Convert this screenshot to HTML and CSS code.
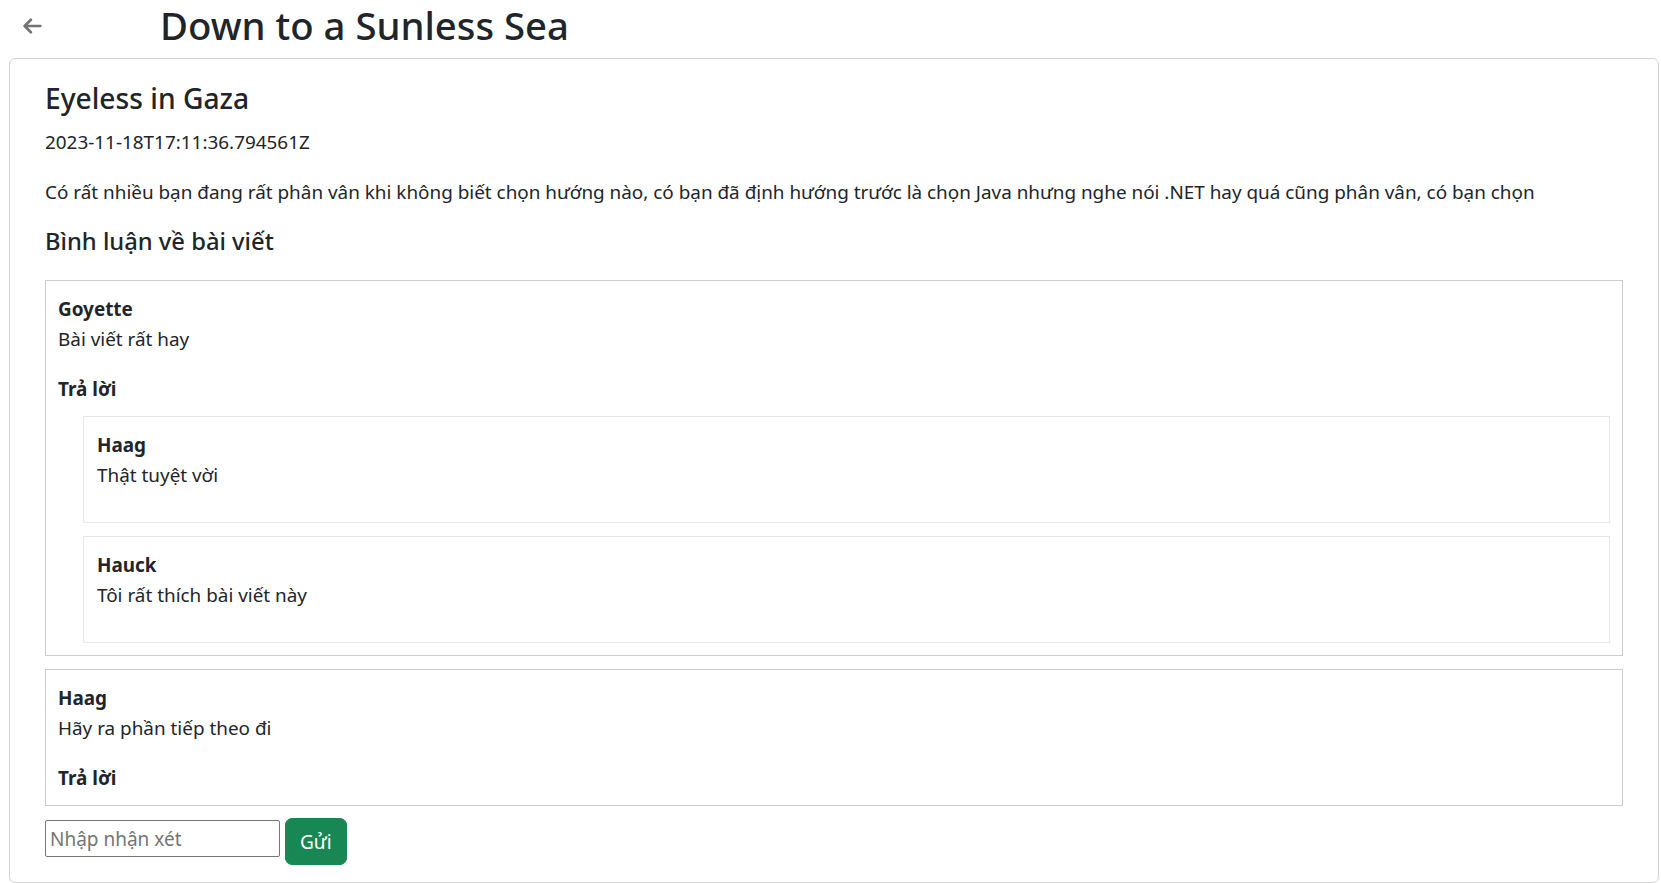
FILE: index.html
```html
<!DOCTYPE html>
<html lang="vi">
<head>
<meta charset="utf-8">
<title>Down to a Sunless Sea</title>
<link rel="stylesheet" href="styles.css">
</head>
<body>
<header class="topbar">
  <a class="back" href="#" aria-label="Quay lại">
    <svg viewBox="0 0 20 18" width="20" height="18" aria-hidden="true">
      <path d="M18.3 9H2.9M8.9 2.7L2.6 9L8.9 15.3" fill="none" stroke="currentColor" stroke-width="2.7" stroke-linecap="round" stroke-linejoin="round"/>
    </svg>
  </a>
  <h2 class="page-title">Down to a Sunless Sea</h2>
</header>
<main class="card">
  <h4 class="post-title">Eyeless in Gaza</h4>
  <p class="post-date">2023-11-18T17:11:36.794561Z</p>
  <p class="post-body">Có rất nhiều bạn đang rất phân vân khi không biết chọn hướng nào, có bạn đã định hướng trước là chọn Java nhưng nghe nói .NET hay quá cũng phân vân, có bạn chọn</p>
  <h5 class="section-title">Bình luận về bài viết</h5>
  <div class="comments">
    <div class="comment">
      <div class="author">Goyette</div>
      <p class="content">Bài viết rất hay</p>
      <div class="reply-label">Trả lời</div>
      <div class="replies">
        <div class="reply">
          <div class="author">Haag</div>
          <p class="content">Thật tuyệt vời</p>
        </div>
        <div class="reply">
          <div class="author">Hauck</div>
          <p class="content">Tôi rất thích bài viết này</p>
        </div>
      </div>
    </div>
    <div class="comment">
      <div class="author">Haag</div>
      <p class="content">Hãy ra phần tiếp theo đi</p>
      <div class="reply-label">Trả lời</div>
    </div>
  </div>
  <form class="comment-form">
    <input class="comment-input" type="text" placeholder="Nhập nhận xét">
    <button class="btn-send" type="button">Gửi</button>
  </form>
</main>
</body>
</html>
```
FILE: styles.css
```css
* { box-sizing: border-box; }

html, body {
  margin: 0;
  padding: 0;
  background: #fff;
}

body {
  font-family: "Noto Sans", "Open Sans", sans-serif;
  font-size: 18.9px;
  line-height: 30px;
  color: #212529;
}

.topbar {
  display: flex;
  align-items: flex-start;
  height: 58px;
  padding: 1px 0 0 22px;
}

.back {
  display: block;
  width: 20px;
  height: 18px;
  margin-top: 16px;
  color: #737373;
}

.back svg { display: block; }

.page-title {
  margin: 0 0 0 118px;
  font-size: 38.3px;
  line-height: 48px;
  font-weight: 500;
}

.card {
  margin: 0 2px 0 9px;
  border: 1px solid #d4d4d4;
  border-radius: 6px;
  padding: 21px 35px 17px;
}

.post-title {
  margin: 0 0 11px;
  font-size: 28.2px;
  line-height: 36px;
  font-weight: 500;
}

.post-date {
  margin: 0 0 20px;
}

.post-body {
  margin: 0 0 19px;
}

.section-title {
  margin: 0 0 24px;
  font-size: 23.75px;
  line-height: 30px;
  font-weight: 500;
}

.comments {
  display: flex;
  flex-direction: column;
  gap: 13px;
}

.comment {
  border: 1px solid #cdcdcd;
  padding: 13px 12px 12px;
}

.author {
  font-weight: 700;
}

.content {
  margin: 0 0 20px;
}

.reply-label {
  font-weight: 700;
}

.replies {
  display: flex;
  flex-direction: column;
  gap: 13px;
  margin: 12px 0 0 25px;
}

.reply {
  border: 1px solid #e8e8e8;
  padding: 13px 13px 12px;
}

.comment-form {
  display: flex;
  align-items: flex-start;
  gap: 5px;
  margin-top: 12px;
}

.comment-input {
  width: 235px;
  height: 37px;
  margin-top: 2px;
  padding: 0 4px;
  border: 1px solid #767676;
  border-radius: 2px;
  font-family: inherit;
  font-size: 19px;
  color: #212529;
  background: #fff;
}

.comment-input::placeholder {
  color: #757575;
}

.btn-send {
  height: 47px;
  padding: 0 14px;
  border: 1px solid #198754;
  border-radius: 7px;
  background: #198754;
  color: #fff;
  font-family: inherit;
  font-size: 19px;
  line-height: 30px;
}
```
